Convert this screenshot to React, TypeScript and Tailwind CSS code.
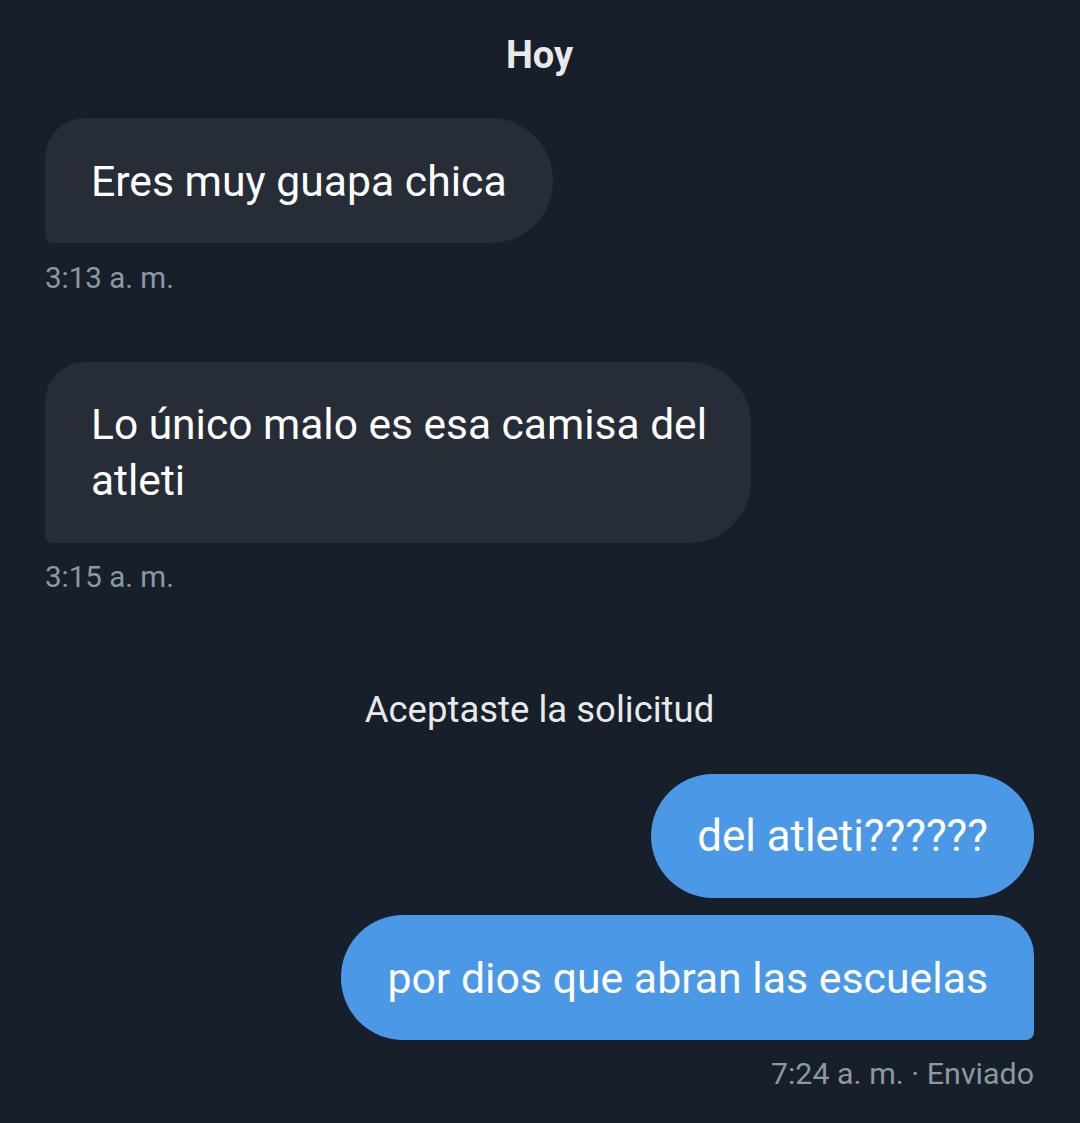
import React from "react";

type Msg = { text: string; time?: string };

const received: Msg[] = [
  { text: "Eres muy guapa chica", time: "3:13 a. m." },
  { text: "Lo único malo es esa camisa del atleti", time: "3:15 a. m." },
];

const App: React.FC = () => {
  return (
    <div
      className="min-h-[1123px] w-[1080px] bg-[#171f2a] pl-[45px] pr-[46px] pt-[33px]"
      style={{ fontFamily: "Roboto, 'Noto Sans', sans-serif" }}
    >
      {/* day label */}
      <div className="text-center text-[38px] leading-[44px] font-bold text-[#e7e9ea]">Hoy</div>

      {/* received messages */}
      <div className="mt-[41px] flex flex-col items-start">
        <div className="rounded-tl-[40px] rounded-tr-[62px] rounded-br-[62px] rounded-bl-[8px] bg-[#262d36] px-[46px] py-[34.5px] text-[42.7px] leading-[56px] text-white max-w-[706px]">
          {received[0].text}
        </div>
        <div className="mt-[18px] text-[29.5px] leading-[34px] text-[#8b98a5]">{received[0].time}</div>

        <div className="mt-[67px] w-[706px] rounded-tl-[40px] rounded-tr-[62px] rounded-br-[62px] rounded-bl-[8px] bg-[#262d36] pl-[46px] pr-[38px] py-[34.5px] text-[42.5px] leading-[56px] text-white">
          {received[1].text}
        </div>
        <div className="mt-[17px] text-[29.5px] leading-[34px] text-[#8b98a5]">{received[1].time}</div>
      </div>

      {/* system notice */}
      <div className="mt-[96px] text-center text-[36.5px] leading-[40px] text-[#e7e9ea]">
        Aceptaste la solicitud
      </div>

      {/* sent messages */}
      <div className="mt-[44px] flex flex-col items-end">
        <div className="rounded-[62px] bg-[#4a98e6] px-[46px] py-[34px] text-[43.8px] leading-[56px] text-white">
          del atleti??????
        </div>
        <div className="mt-[17px] rounded-tl-[62px] rounded-bl-[62px] rounded-tr-[40px] rounded-br-[8px] bg-[#4a98e6] px-[46px] py-[34.5px] text-[42.8px] leading-[56px] text-white">
          por dios que abran las escuelas
        </div>
        <div className="mt-[17px] text-[30.4px] leading-[34px] text-[#8b98a5]">7:24 a. m. · Enviado</div>
      </div>
    </div>
  );
};

export default App;
